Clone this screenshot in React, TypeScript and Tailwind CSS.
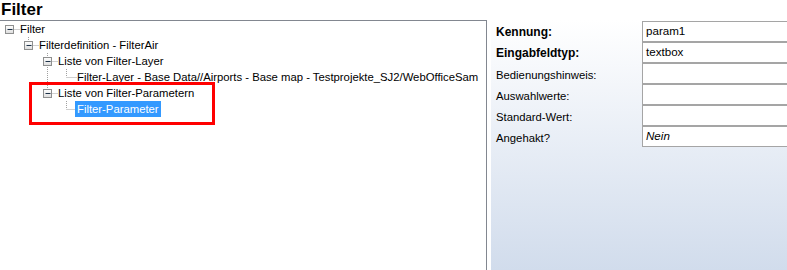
const font = { fontFamily: '"Liberation Sans", Arial, sans-serif' };

type Row = {
  level: number;
  label: string;
  box?: boolean;
  // vertical line for own level: "full" passes to next sibling, "half" stops at centre
  own?: "full" | "half" | "none";
  pass?: number[]; // ancestor levels whose line runs through this row
  selected?: boolean;
};

const rows: Row[] = [
  { level: 0, label: "Filter", box: true, own: "none" },
  { level: 1, label: "Filterdefinition - FilterAir", box: true, own: "half" },
  { level: 2, label: "Liste von Filter-Layer", box: true, own: "full" },
  {
    level: 3,
    label: "Filter-Layer - Base Data//Airports - Base map - Testprojekte_SJ2/WebOfficeSam",
    own: "half",
    pass: [2],
  },
  { level: 2, label: "Liste von Filter-Parametern", box: true, own: "half" },
  { level: 3, label: "Filter-Parameter", own: "half", selected: true },
];

const cx = (level: number) => 9 + level * 19;

function Gutter({ row }: { row: Row }) {
  const w = cx(row.level) + 11;
  const c = cx(row.level) + 0.5;
  return (
    <svg width={w} height={16} className="shrink-0">
      <g stroke="#a0a0a0" strokeWidth="1" strokeDasharray="1 1">
        {(row.pass ?? []).map((l) => (
          <line key={l} x1={cx(l) + 0.5} y1={0} x2={cx(l) + 0.5} y2={16} />
        ))}
        {row.own === "full" && <line x1={c} y1={0} x2={c} y2={16} />}
        {row.own === "half" && <line x1={c} y1={0} x2={c} y2={8} />}
        <line x1={c} y1={8.5} x2={w} y2={8.5} />
      </g>
      {row.box && (
        <g>
          <defs>
            <linearGradient id="bx" x1="0" y1="0" x2="0" y2="1">
              <stop offset="0" stopColor="#ffffff" />
              <stop offset="1" stopColor="#dcdcdc" />
            </linearGradient>
          </defs>
          <rect x={c - 4} y={4.5} width={8} height={8} fill="url(#bx)" stroke="#8e8f8f" />
          <line x1={c - 2} y1={8.5} x2={c + 3} y2={8.5} stroke="#1d3249" />
        </g>
      )}
    </svg>
  );
}

function TreeRow({ row }: { row: Row }) {
  return (
    <div className="flex h-4 items-center">
      <Gutter row={row} />
      <span
        className={
          row.selected
            ? "-ml-[2px] h-4 bg-[#3399ff] px-[2px] leading-4 text-white"
            : "h-4 leading-4 text-black"
        }
      >
        {row.label}
      </span>
    </div>
  );
}

const props: { label: string; value: string; bold?: boolean; italic?: boolean }[] = [
  { label: "Kennung:", value: "param1", bold: true },
  { label: "Eingabfeldtyp:", value: "textbox", bold: true },
  { label: "Bedienungshinweis:", value: "" },
  { label: "Auswahlwerte:", value: "" },
  { label: "Standard-Wert:", value: "" },
  { label: "Angehakt?", value: "Nein", italic: true },
];

export default function App() {
  return (
    <div className="flex h-[270px] w-[787px] flex-col overflow-hidden bg-white" style={font}>
      <div className="h-5 pl-[1px] text-[17px] font-bold leading-5 text-black">Filter</div>
      <div className="flex min-h-0 flex-1">
        <div className="relative w-[487px] shrink-0 border-t border-r border-[#828790] text-[11.3px]">
          {rows.map((r, i) => (
            <TreeRow key={i} row={r} />
          ))}
          <div className="absolute left-[29px] top-[61px] h-[43px] w-[186px] border-[3px] border-[#ff0000]" />
        </div>
        <div className="ml-1 flex-1 bg-gradient-to-b from-[#ffffff] to-[#d1dcec] pt-[1px]">
          {props.map((p) => (
            <div key={p.label} className="flex h-[21px]">
              <div
                className={
                  "w-[151px] shrink-0 pl-[5px] text-[#000000] " +
                  (p.bold ? "pt-[2px] text-[12px] font-bold" : "pt-[4px] text-[11.3px]")
                }
              >
                {p.label}
              </div>
              <div
                className={
                  "flex-1 border-y border-l border-[#a5a5a5] bg-white pl-[3px] text-[11.6px] leading-[18px] text-black " +
                  (p.italic ? "italic" : "")
                }
              >
                {p.value}
              </div>
            </div>
          ))}
        </div>
      </div>
    </div>
  );
}
